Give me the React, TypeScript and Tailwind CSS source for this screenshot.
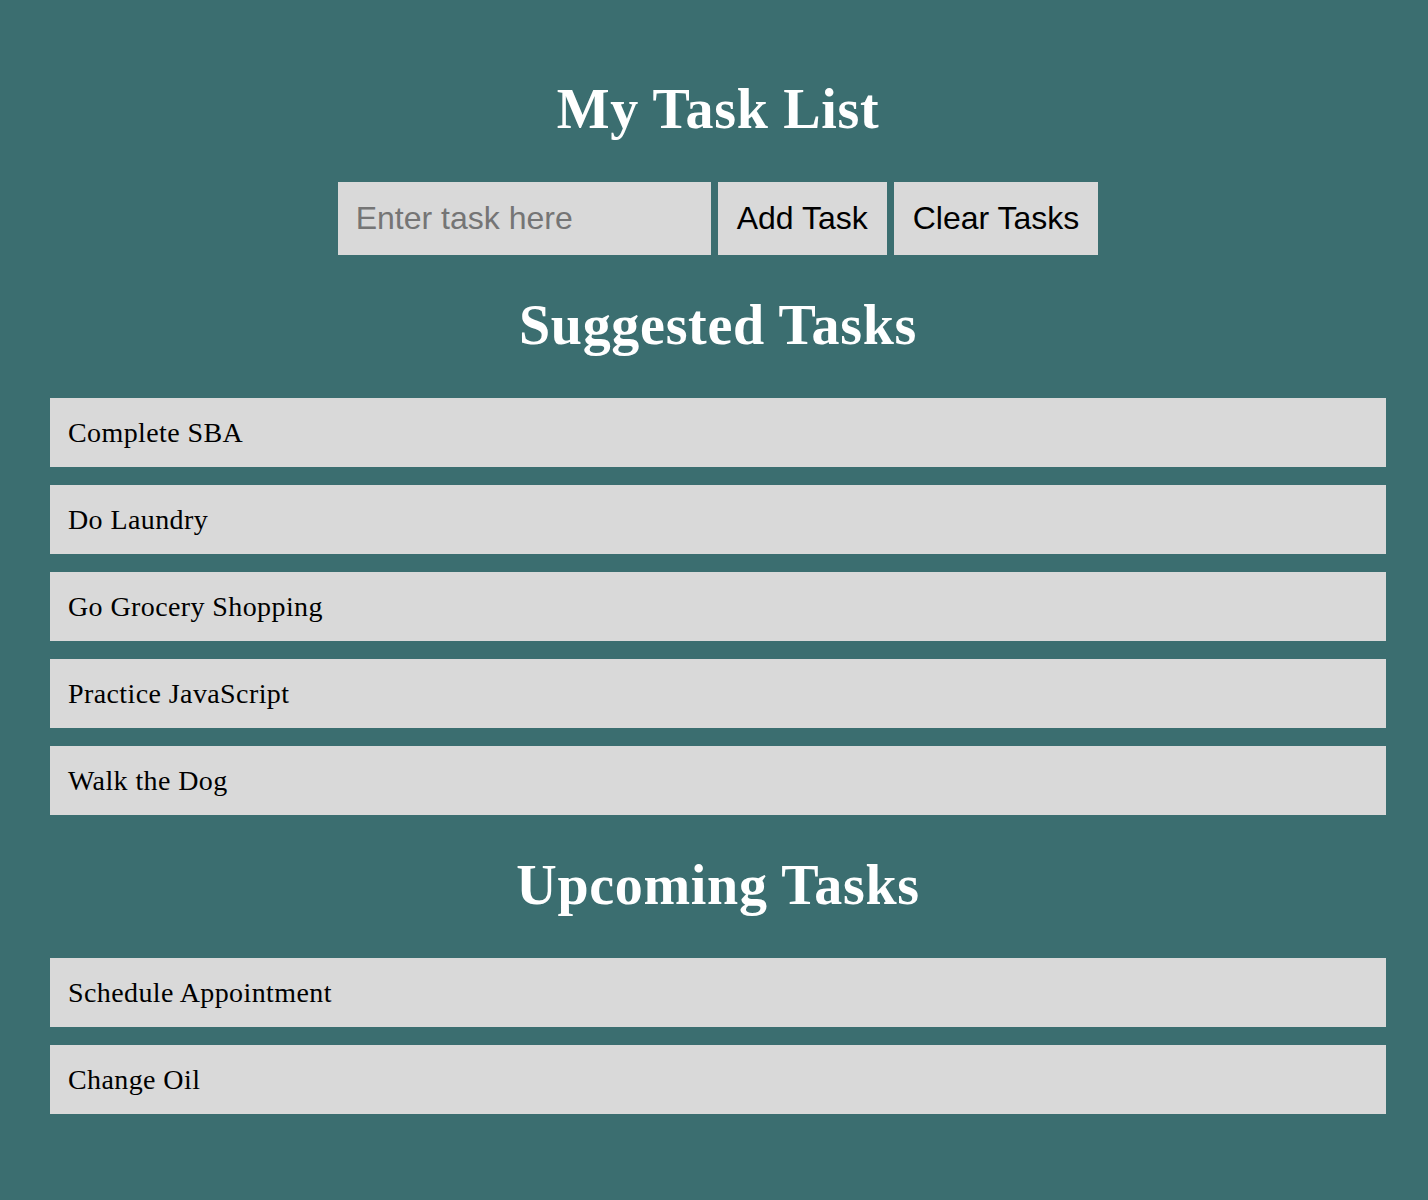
import React from 'react'

const suggested = ['Complete SBA', 'Do Laundry', 'Go Grocery Shopping', 'Practice JavaScript', 'Walk the Dog']
const upcoming = ['Schedule Appointment', 'Change Oil']

function Heading({ children, className = '' }: { children: React.ReactNode; className?: string }) {
  return (
    <h2
      className={`text-center text-[56px] leading-[64px] tracking-[0.7px] font-bold text-white font-['Liberation_Serif','Times_New_Roman',serif] ${className}`}
    >
      {children}
    </h2>
  )
}

function TaskList({ items }: { items: string[] }) {
  return (
    <ul className="flex flex-col gap-[18px]">
      {items.map((t) => (
        <li
          key={t}
          className="h-[69px] bg-[#d9d9d9] px-[18px] pt-[18px] text-[28px] leading-[33px] tracking-[0.4px] text-black font-['Liberation_Serif','Times_New_Roman',serif]"
        >
          {t}
        </li>
      ))}
    </ul>
  )
}

export default function App() {
  const btn =
    "h-[73px] bg-[#d9d9d9] px-[19px] text-[32px] leading-[37px] text-black font-['Liberation_Sans',Arial,sans-serif]"
  return (
    <div className="min-h-[1200px] bg-[#3b6e70] pl-[50px] pr-[42px] pt-[77px]">
      <Heading>My Task List</Heading>
      <div className="mt-[41px] flex justify-center gap-[7px]">
        <input
          type="text"
          placeholder="Enter task here"
          className="h-[73px] w-[373px] bg-[#d9d9d9] px-[18px] text-[32px] leading-[37px] text-black outline-none placeholder:text-[#757575] font-['Liberation_Sans',Arial,sans-serif]"
        />
        <button className={btn}>Add Task</button>
        <button className={btn}>Clear Tasks</button>
      </div>
      <Heading className="mt-[38px] mb-[41px]">Suggested Tasks</Heading>
      <TaskList items={suggested} />
      <Heading className="mt-[38px] mb-[41px]">Upcoming Tasks</Heading>
      <TaskList items={upcoming} />
    </div>
  )
}
